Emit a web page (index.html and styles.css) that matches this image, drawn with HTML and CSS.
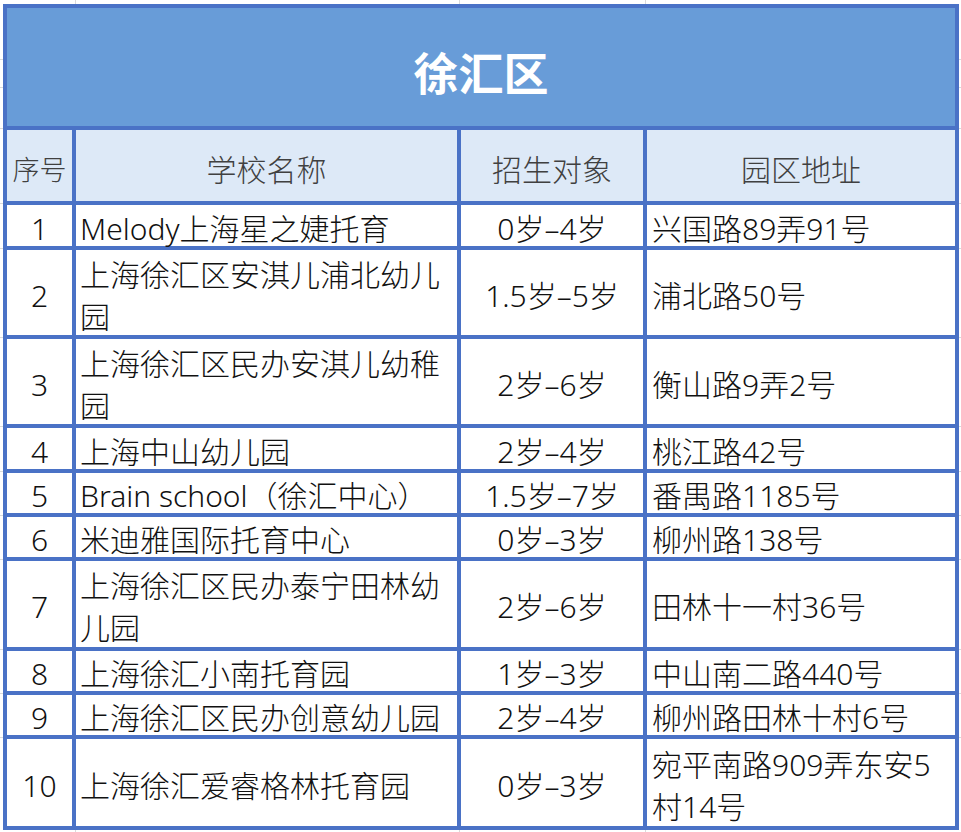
FILE: index.html
```html
<!DOCTYPE html>
<html lang="zh-CN">
<head>
<meta charset="utf-8">
<title>徐汇区</title>
<link rel="stylesheet" href="styles.css">
</head>
<body>
<div class="sheet">
  <div class="title">徐汇区</div>

  <div class="head head-no">序号</div>
  <div class="head">学校名称</div>
  <div class="head">招生对象</div>
  <div class="head">园区地址</div>

  <div class="cell no">1</div>
  <div class="cell name">Melody上海星之婕托育</div>
  <div class="cell age">0岁–4岁</div>
  <div class="cell addr">兴国路89弄91号</div>

  <div class="cell no">2</div>
  <div class="cell name">上海徐汇区安淇儿浦北幼儿园</div>
  <div class="cell age">1.5岁–5岁</div>
  <div class="cell addr">浦北路50号</div>

  <div class="cell no">3</div>
  <div class="cell name">上海徐汇区民办安淇儿幼稚园</div>
  <div class="cell age">2岁–6岁</div>
  <div class="cell addr">衡山路9弄2号</div>

  <div class="cell no">4</div>
  <div class="cell name">上海中山幼儿园</div>
  <div class="cell age">2岁–4岁</div>
  <div class="cell addr">桃江路42号</div>

  <div class="cell no">5</div>
  <div class="cell name">Brain school（徐汇中心）</div>
  <div class="cell age">1.5岁–7岁</div>
  <div class="cell addr">番禺路1185号</div>

  <div class="cell no">6</div>
  <div class="cell name">米迪雅国际托育中心</div>
  <div class="cell age">0岁–3岁</div>
  <div class="cell addr">柳州路138号</div>

  <div class="cell no">7</div>
  <div class="cell name">上海徐汇区民办泰宁田林幼儿园</div>
  <div class="cell age">2岁–6岁</div>
  <div class="cell addr">田林十一村36号</div>

  <div class="cell no">8</div>
  <div class="cell name">上海徐汇小南托育园</div>
  <div class="cell age">1岁–3岁</div>
  <div class="cell addr">中山南二路440号</div>

  <div class="cell no">9</div>
  <div class="cell name">上海徐汇区民办创意幼儿园</div>
  <div class="cell age">2岁–4岁</div>
  <div class="cell addr">柳州路田林十村6号</div>

  <div class="cell no">10</div>
  <div class="cell name">上海徐汇爱睿格林托育园</div>
  <div class="cell age">0岁–3岁</div>
  <div class="cell addr">宛平南路909弄东安5村14号</div>
</div>
</body>
</html>
```

FILE: styles.css
```css
html, body {
  margin: 0;
  padding: 0;
}

body {
  width: 961px;
  height: 832px;
  overflow: hidden;
  background-color: #ffffff;
  /* faint spreadsheet gridlines showing around the table */
  background-image:
    linear-gradient(#dadada, #dadada),
    linear-gradient(#dadada, #dadada),
    linear-gradient(#dadada, #dadada),
    linear-gradient(#dadada, #dadada),
    linear-gradient(#dadada, #dadada),
    linear-gradient(#dadada, #dadada),
    linear-gradient(#dadada, #dadada),
    linear-gradient(#dadada, #dadada),
    linear-gradient(#dadada, #dadada),
    linear-gradient(#dadada, #dadada),
    linear-gradient(#dadada, #dadada),
    linear-gradient(#dadada, #dadada),
    linear-gradient(#dadada, #dadada),
    linear-gradient(#dadada, #dadada),
    linear-gradient(#dadada, #dadada),
    linear-gradient(#dadada, #dadada);
  background-repeat: no-repeat;
  background-size:
    1px 100%, 1px 100%, 1px 100%,
    100% 1px, 100% 1px, 100% 1px, 100% 1px, 100% 1px, 100% 1px,
    100% 1px, 100% 1px, 100% 1px, 100% 1px, 100% 1px, 100% 1px, 100% 1px;
  background-position:
    75px 0, 459px 0, 645px 0,
    0 59px, 0 87px, 0 128px, 0 203px, 0 248px, 0 337px,
    0 426px, 0 471px, 0 515px, 0 559px, 0 649px, 0 693px, 0 737px;
  font-family: "Noto Sans", "Noto Sans CJK SC", sans-serif;
  font-weight: 300;
}

.sheet {
  display: grid;
  grid-template-columns: 65px 381px 182px 308px;
  grid-template-rows: 118px 71px 41px 85px 85px 41px 40px 40px 86px 40px 40px 87px;
  gap: 4px;
  padding: 4px;
  margin: 4px 0 0 3px;
  width: max-content;
  background: #4a72c6;
}

.title {
  grid-column: 1 / -1;
  display: flex;
  align-items: center;
  justify-content: center;
  padding-top: 8px;
  background: #689cd8;
  color: #ffffff;
  font-family: "Noto Sans CJK SC", sans-serif;
  font-size: 45px;
  font-weight: 600;
}

.head {
  display: flex;
  align-items: center;
  justify-content: center;
  padding-top: 9px;
  background: #dde9f7;
  color: #404040;
  font-size: 30px;
  line-height: 42px;
}

.head-no {
  font-size: 27px;
}

.cell {
  display: flex;
  align-items: center;
  padding-top: 6px;
  background: #ffffff;
  color: #111111;
  font-size: 30px;
  line-height: 42px;
}

.no,
.age {
  justify-content: center;
  text-align: center;
}

.name {
  padding-left: 4px;
  padding-right: 2px;
}

.addr {
  padding-left: 5px;
  padding-right: 2px;
}
```
